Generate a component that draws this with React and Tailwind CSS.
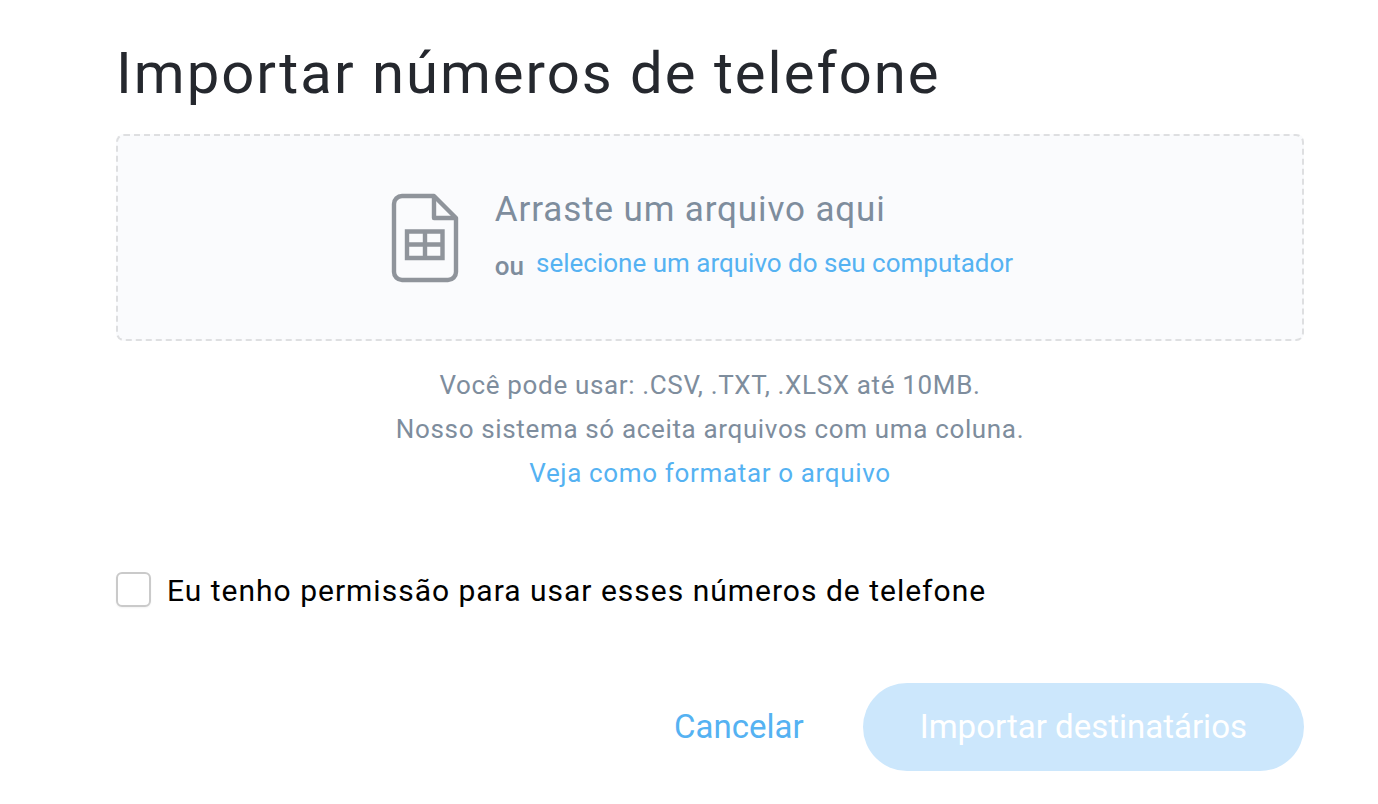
function SheetIcon() {
  return (
    <svg width="68" height="90" viewBox="0 0 68 90" fill="none" stroke="#8f949b" strokeWidth="4.4" aria-hidden="true">
      <path d="M43 3H11a8 8 0 0 0-8 8v68a8 8 0 0 0 8 8h46a8 8 0 0 0 8-8V25z" strokeLinejoin="round" />
      <path d="M43 3v22h22" strokeLinejoin="round" />
      <path d="M16 38.5h35.5v26.5H16zM34 38v27M16 51.5h36" />
    </svg>
  )
}

function App() {
  return (
    <main className="pl-[116px] pr-[74px] pt-9 font-['Roboto',sans-serif]">
      <h1 className="text-[58px] leading-[74px] tracking-[2px] text-[#25282e]">Importar números de telefone</h1>

      {/* Drop zone */}
      <div className="mt-6 flex h-[207px] items-center justify-center gap-9 rounded-lg border-2 border-dashed border-[#dedfe1] bg-[#fafbfd] pr-4">
        <SheetIcon />
        <div className="pt-1 text-[#7e8d9d]">
          <p className="text-[35px] leading-[52px] tracking-wide">Arraste um arquivo aqui</p>
          <div className="flex items-start gap-3 text-[26px]">
            <span className="font-medium leading-[60px]">ou</span>
            <button type="button" className="leading-[54px] text-[#55b2f2]">selecione um arquivo do seu computador</button>
          </div>
        </div>
      </div>

      {/* Format help */}
      <div className="mt-[22px] text-center text-[26px] leading-[44px] tracking-wide text-[#7e8d9d]">
        <p>Você pode usar: .CSV, .TXT, .XLSX até 10MB.</p>
        <p>Nosso sistema só aceita arquivos com uma coluna.</p>
        <a href="#formato" className="text-[#55b2f2]">Veja como formatar o arquivo</a>
      </div>

      <label className="mt-[70px] flex items-center gap-4 text-[30px] leading-[44px] tracking-[1px] text-black">
        <input type="checkbox" className="size-[35px] appearance-none rounded-md border-2 border-[#cacaca] bg-white shadow-xs" />
        <span className="pt-1">Eu tenho permissão para usar esses números de telefone</span>
      </label>

      <div className="mt-[70px] flex items-center justify-end gap-[59px] text-[33px]">
        <button type="button" className="text-[#55b2f2]">Cancelar</button>
        <button type="button" disabled className="h-[88px] rounded-full bg-[#cce7fc] px-[57px] text-white">
          Importar destinatários
        </button>
      </div>
    </main>
  )
}

export default App
